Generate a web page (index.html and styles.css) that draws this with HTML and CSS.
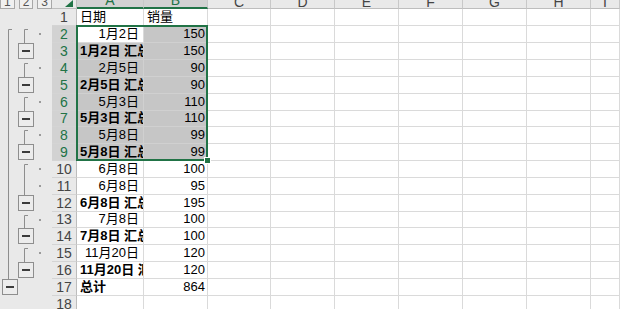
FILE: index.html
```html
<!DOCTYPE html>
<html lang="zh-CN">
<head>
    <meta charset="UTF-8">
    <title>销量 分类汇总</title>
    <link rel="stylesheet" href="styles.css">
</head>
<body>

    <div class="sheet" id="sheet">
        <div class="levels">
            <span class="lvl">1</span>
            <span class="lvl">2</span>
            <span class="lvl">3</span>
        </div>
        <div class="corner">
            <svg width="24" height="8" viewBox="0 0 24 8"><polygon points="13,7 21,7 21,0" fill="#217346"/></svg>
        </div>
        <div class="col-head sel"><span>A</span></div>
        <div class="col-head sel"><span>B</span></div>
        <div class="col-head"><span>C</span></div>
        <div class="col-head"><span>D</span></div>
        <div class="col-head"><span>E</span></div>
        <div class="col-head"><span>F</span></div>
        <div class="col-head"><span>G</span></div>
        <div class="col-head"><span>H</span></div>
        <div class="col-head"><span>I</span></div>
        <div class="outline" id="outline"></div>
        <div class="selection"><span class="handle"></span></div>
    </div>

    <script>
        // 数据：A 列日期，B 列销量，total 为汇总行
        const rows = [
            { a: '日期', b: '销量', title: true },
            { a: '1月2日', b: 150 },
            { a: '1月2日 汇总', b: 150, total: true },
            { a: '2月5日', b: 90 },
            { a: '2月5日 汇总', b: 90, total: true },
            { a: '5月3日', b: 110 },
            { a: '5月3日 汇总', b: 110, total: true },
            { a: '5月8日', b: 99 },
            { a: '5月8日 汇总', b: 99, total: true },
            { a: '6月8日', b: 100 },
            { a: '6月8日', b: 95 },
            { a: '6月8日 汇总', b: 195, total: true },
            { a: '7月8日', b: 100 },
            { a: '7月8日 汇总', b: 100, total: true },
            { a: '11月20日', b: 120 },
            { a: '11月20日 汇总', b: 120, total: true },
            { a: '总计', b: 864, total: true },
            { a: '', b: '' }
        ];

        // 分组：[第一行明细, 汇总行]
        const groups = [[2, 3], [4, 5], [6, 7], [8, 9], [10, 12], [13, 14], [15, 16]];

        const sheet = document.getElementById('sheet');

        function makeCell(cls, text) {
            const div = document.createElement('div');
            div.className = cls;
            if (text !== '') {
                const span = document.createElement('span');
                span.textContent = text;
                div.appendChild(span);
            }
            sheet.appendChild(div);
        }

        rows.forEach((row, i) => {
            const n = i + 1;
            const selected = n >= 2 && n <= 9;
            makeCell('row-head' + (selected ? ' sel' : ''), n);

            let aCls = 'cell';
            if (row.title || row.total) aCls += ' left';
            else aCls += ' date';
            if (row.total) aCls += ' bold';
            if (selected && n !== 2) aCls += ' sel';
            makeCell(aCls, row.a);

            let bCls = 'cell ' + (row.title ? 'left' : 'num');
            if (selected) bCls += ' sel';
            makeCell(bCls, row.b);

            for (let c = 0; c < 7; c++) makeCell('cell', '');
        });

        // 行的顶部位置（第7、13行稍矮）
        const tops = [];
        let y = 9;
        for (let n = 1; n <= 18; n++) {
            tops[n] = y;
            y += (n === 7 || n === 13) ? 16 : 17;
        }

        // 分级显示的线和按钮
        function minusBox(x, top) {
            return `<rect x="${x + 0.5}" y="${top + 0.5}" width="15" height="15" fill="#ececec" stroke="#8e8e8e"/>` +
                   `<rect x="${x + 4}" y="${top + 7}" width="8" height="2" fill="#3c3c3c"/>`;
        }

        let svg = '';
        svg += `<path d="M12 ${tops[2] + 3.5} H8.5 V${tops[17]}" fill="none" stroke="#8e8e8e"/>`;
        svg += minusBox(2, tops[17]);
        groups.forEach(([first, sum]) => {
            svg += `<path d="M28 ${tops[first] + 3.5} H24.5 V${tops[sum]}" fill="none" stroke="#8e8e8e"/>`;
            svg += minusBox(18, tops[sum]);
            for (let n = first; n < sum; n++) {
                svg += `<rect x="39" y="${tops[n] + 7}" width="2" height="2" fill="#9a9a9a"/>`;
            }
        });

        document.getElementById('outline').innerHTML =
            `<svg width="52" height="304" viewBox="0 9 52 304">${svg}</svg>`;
    </script>

</body>
</html>
```

FILE: styles.css
```css
body {
    margin: 0;
    background-color: #ffffff;
    font-family: "Liberation Sans", "Noto Sans CJK SC", sans-serif;
    font-size: 13px;
    color: #000000;
    overflow: hidden;
}
.sheet {
    position: relative;
    display: grid;
    grid-template-columns: 52px 25px 67px 64px 63px 64px 64px 64px 64px 64px 1fr;
    grid-template-rows: 9px repeat(6, 17px) 16px repeat(5, 17px) 16px repeat(5, 17px);
    height: 309px;
    overflow: hidden;
}
.levels {
    background-color: #e9e9e9;
    display: flex;
    gap: 4px;
    overflow: hidden;
}
.lvl {
    width: 13px;
    height: 13px;
    margin-top: -6px;
    border: 1px solid #a8a8a8;
    background-color: #f0f0f0;
    color: #555555;
    font-size: 12px;
    line-height: 14px;
    text-align: center;
}
.corner {
    background-color: #e9e9e9;
    border-right: 1px solid #bdbdbd;
    border-bottom: 1px solid #bdbdbd;
    overflow: hidden;
}
.corner svg {
    display: block;
}
.col-head {
    background-color: #e9e9e9;
    border-right: 1px solid #c8c8c8;
    border-bottom: 1px solid #bdbdbd;
    color: #444444;
    font-size: 14px;
    display: flex;
    justify-content: center;
    align-items: flex-end;
    overflow: hidden;
}
.col-head span {
    line-height: 14px;
    margin-bottom: -1px;
}
.col-head.sel {
    background-color: #d2d2d2;
    color: #217346;
    border-bottom: 2px solid #217346;
}
.col-head.sel span {
    margin-bottom: 0;
}
.outline {
    grid-column: 1;
    grid-row: 2 / -1;
    background-color: #e9e9e9;
    overflow: hidden;
}
.outline svg {
    display: block;
}
.row-head {
    background-color: #e9e9e9;
    border-right: 1px solid #bdbdbd;
    border-bottom: 1px solid #d4d4d4;
    color: #444444;
    font-size: 14px;
    display: flex;
    justify-content: center;
    align-items: flex-end;
    overflow: hidden;
}
.row-head.sel {
    background-color: #d2d2d2;
    color: #217346;
}
.row-head span,
.cell span {
    line-height: 16px;
    white-space: nowrap;
}
.cell {
    border-right: 1px solid #dadada;
    border-bottom: 1px solid #dadada;
    display: flex;
    align-items: flex-end;
    overflow: hidden;
}
.cell.left {
    justify-content: flex-start;
    padding-left: 3px;
}
.cell.date {
    justify-content: flex-end;
    padding-right: 4px;
}
.cell.num {
    justify-content: flex-end;
    padding-right: 2px;
}
.cell.bold {
    font-weight: bold;
}
.cell.sel {
    background-color: #c6c6c6;
    border-color: #d0d0d0;
}
.selection {
    position: absolute;
    left: 76px;
    top: 25px;
    width: 132px;
    height: 136px;
    box-sizing: border-box;
    border: 2px solid #217346;
    pointer-events: none;
}
.handle {
    position: absolute;
    right: -5px;
    bottom: -5px;
    width: 5px;
    height: 5px;
    background-color: #217346;
    border: 1px solid #ffffff;
}
```
